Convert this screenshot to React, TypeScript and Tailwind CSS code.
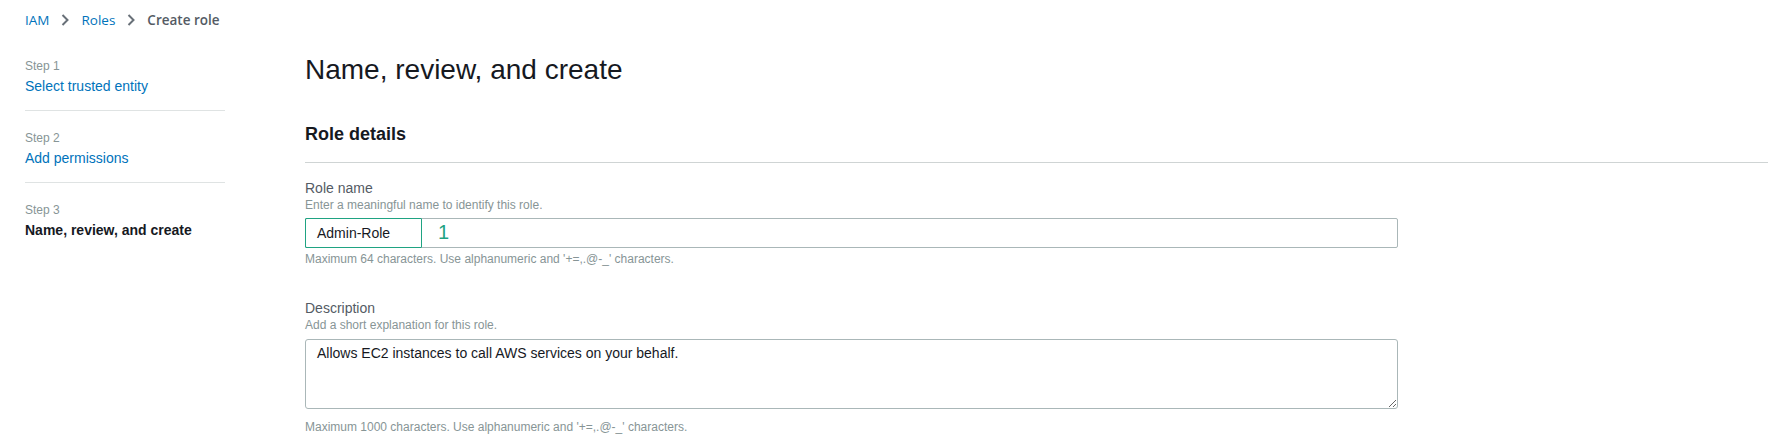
import React from "react";

const Chevron = () => (
  <svg width="8" height="12" viewBox="0 0 8 12" className="mx-[12px] shrink-0">
    <path d="M1.5 1 L6.5 6 L1.5 11" fill="none" stroke="#687078" strokeWidth="2" />
  </svg>
);

const Step = ({
  n,
  title,
  current,
  last,
}: {
  n: number;
  title: string;
  current?: boolean;
  last?: boolean;
}) => (
  <div className={`${n === 1 ? "pt-0" : "pt-[19px]"} pb-[14px] ${last ? "" : "border-b border-[#dfe3e3]"}`}>
    <div className="text-[12px] leading-[16px] text-[#879596]">Step {n}</div>
    <div
      className={`mt-[2px] text-[14px] leading-[20px] ${
        current ? "font-bold text-[#16191f]" : "text-[#0073bb]"
      }`}
    >
      {title}
    </div>
  </div>
);

export default function App() {
  return (
    <div className="min-h-[446px] w-full bg-white font-['Liberation_Sans',Arial,sans-serif] text-[#16191f]">
      <div className="flex items-center pl-[25px] pt-[10px] h-[30px] font-['Open_Sans',sans-serif] text-[13.5px] leading-[20px]">
        <span className="text-[#0073bb]">IAM</span>
        <Chevron />
        <span className="text-[#0073bb]">Roles</span>
        <Chevron />
        <span className="font-semibold text-[#545b64]">Create role</span>
      </div>
      <div className="flex pl-[25px] pr-[23px]">
        <nav className="w-[200px] shrink-0 mt-[28px]">
          <Step n={1} title="Select trusted entity" />
          <Step n={2} title="Add permissions" />
          <Step n={3} title="Name, review, and create" current last />
        </nav>
        <main className="flex-1 ml-[80px] pt-[22px]">
          <h1 className="text-[28px] leading-[36px] text-[#16191f] font-normal">Name, review, and create</h1>
          <div className="mt-[34px] pb-[16px] border-b border-[#cfd4d4]">
            <h2 className="text-[18px] leading-[24px] font-bold text-[#16191f]">Role details</h2>
          </div>
          <div className="mt-[16px]">
            <div className="text-[14px] leading-[18px] text-[#545b64]">Role name</div>
            <div className="text-[12px] leading-[16px] text-[#879596]">Enter a meaningful name to identify this role.</div>
            <div className="relative mt-[5px] w-[1093px]">
              <div className="h-[30px] w-full rounded-[2px] border border-[#aab7b8] px-[11px] flex items-center text-[14px] text-[#16191f]">
                Admin-Role
              </div>
              <div className="absolute left-0 top-0 h-[30px] w-[117px] border-[1.5px] border-[#1fa382] rounded-[1px]" />
              <div className="absolute left-[133px] top-0 h-[28px] flex items-center text-[20px] font-medium text-[#1fa382]">1</div>
            </div>
            <div className="mt-[3px] text-[12px] leading-[16px] text-[#879596]">
              Maximum 64 characters. Use alphanumeric and '+=,.@-_' characters.
            </div>
          </div>
          <div className="mt-[32px]">
            <div className="text-[14px] leading-[18px] text-[#545b64]">Description</div>
            <div className="text-[12px] leading-[16px] text-[#879596]">Add a short explanation for this role.</div>
            <textarea
              readOnly
              defaultValue="Allows EC2 instances to call AWS services on your behalf."
              className="block mt-[6px] h-[70px] w-[1093px] rounded-[3px] border border-[#aab7b8] px-[11px] pt-[4px] text-[14px] leading-[18px] text-[#16191f] font-['Liberation_Sans',Arial,sans-serif] outline-none resize-y"
            />
            <div className="mt-[10px] text-[12px] leading-[16px] text-[#879596]">
              Maximum 1000 characters. Use alphanumeric and '+=,.@-_' characters.
            </div>
          </div>
        </main>
      </div>
    </div>
  );
}
